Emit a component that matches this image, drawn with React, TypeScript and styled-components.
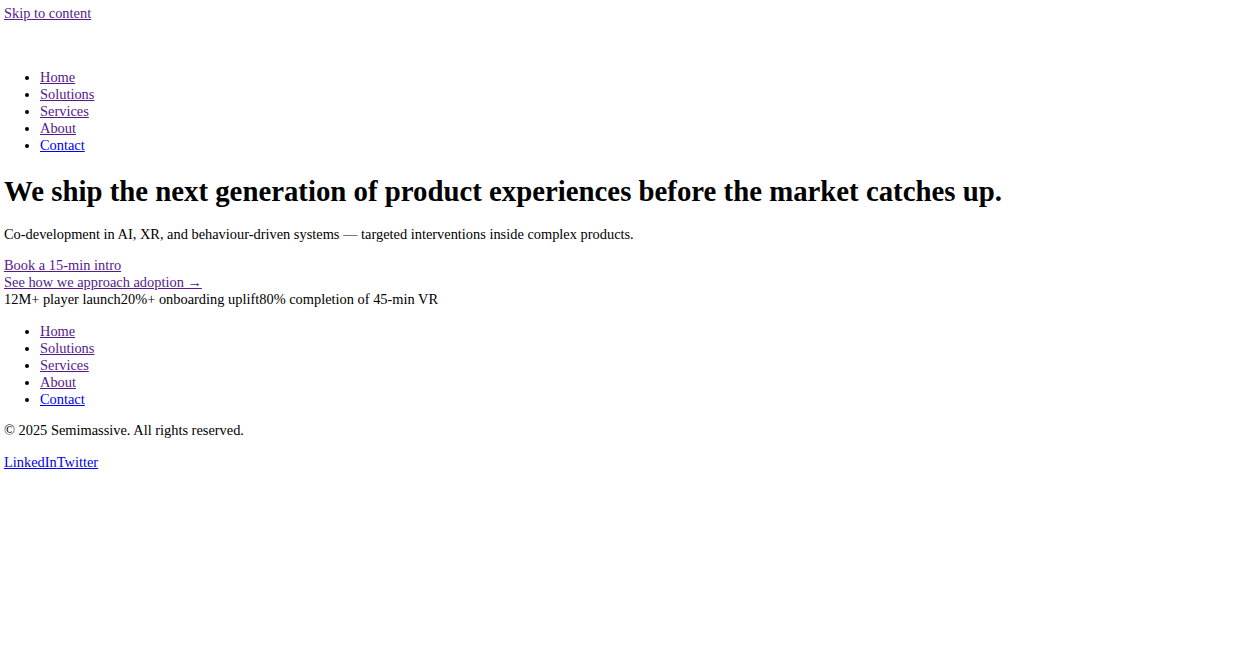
import React from "react";
import styled, { createGlobalStyle } from "styled-components";

const GlobalStyle = createGlobalStyle`
  html, body {
    background: #ffffff;
  }
  body {
    margin: 5px 4px 4px;
    font-family: "Liberation Serif", "Times New Roman", serif;
    font-size: 14.4px;
    line-height: 17px;
    color: #000000;
  }
`;

const Link = styled.a<{ $visited?: boolean }>`
  color: ${(p) => (p.$visited ? "#551a8b" : "#0000ee")};
  text-decoration: underline;
  cursor: pointer;
`;

const Header = styled.header`
  display: block;
`;

const LogoSlot = styled.div`
  height: 33px;
`;

const NavList = styled.ul`
  margin: 14.4px 0;
  padding-left: 36px;
  list-style: disc;
`;

const NavItem = styled.li`
  line-height: 17px;
`;

const Main = styled.main`
  display: block;
`;

const Headline = styled.h1`
  font-size: 28.8px;
  font-weight: bold;
  line-height: 33px;
  margin: 20.3px 0 18.3px;
`;

const Lead = styled.p`
  margin: 14.4px 0;
`;

const Actions = styled.div`
  display: flex;
  flex-direction: column;
  align-items: flex-start;
`;

const Stats = styled.div`
  display: block;
`;

const Stat = styled.span``;

const Footer = styled.footer`
  display: block;
`;

const FooterNav = styled.ul`
  margin: 14.4px 0;
  padding-left: 36px;
  list-style: disc;
`;

const Copy = styled.p`
  margin: 14.4px 0;
`;

const Socials = styled.p`
  margin: 14.4px 0;
`;

const navItems = [
  { label: "Home", visited: true },
  { label: "Solutions", visited: true },
  { label: "Services", visited: true },
  { label: "About", visited: true },
  { label: "Contact", visited: false },
];

const Nav = () => (
  <>
    {navItems.map((n) => (
      <NavItem key={n.label}>
        <Link href="#" $visited={n.visited}>
          {n.label}
        </Link>
      </NavItem>
    ))}
  </>
);

export default function App() {
  return (
    <>
      <GlobalStyle />
      <Link href="#" $visited>
        Skip to content
      </Link>
      <Header>
        <LogoSlot />
        <nav>
          <NavList>
            <Nav />
          </NavList>
        </nav>
      </Header>
      <Main>
        <Headline>
          We ship the next generation of product experiences before the market catches up.
        </Headline>
        <Lead>
          Co-development in AI, XR, and behaviour-driven systems — targeted interventions inside complex products.
        </Lead>
        <Actions>
          <Link href="#" $visited>
            Book a 15-min intro
          </Link>
          <Link href="#" $visited>
            See how we approach adoption →
          </Link>
        </Actions>
        <Stats>
          <Stat>12M+ player launch</Stat>
          <Stat>20%+ onboarding uplift</Stat>
          <Stat>80% completion of 45-min VR</Stat>
        </Stats>
      </Main>
      <Footer>
        <nav>
          <FooterNav>
            <Nav />
          </FooterNav>
        </nav>
        <Copy>© 2025 Semimassive. All rights reserved.</Copy>
        <Socials>
          <Link href="#">LinkedIn</Link>
          <Link href="#">Twitter</Link>
        </Socials>
      </Footer>
    </>
  );
}
